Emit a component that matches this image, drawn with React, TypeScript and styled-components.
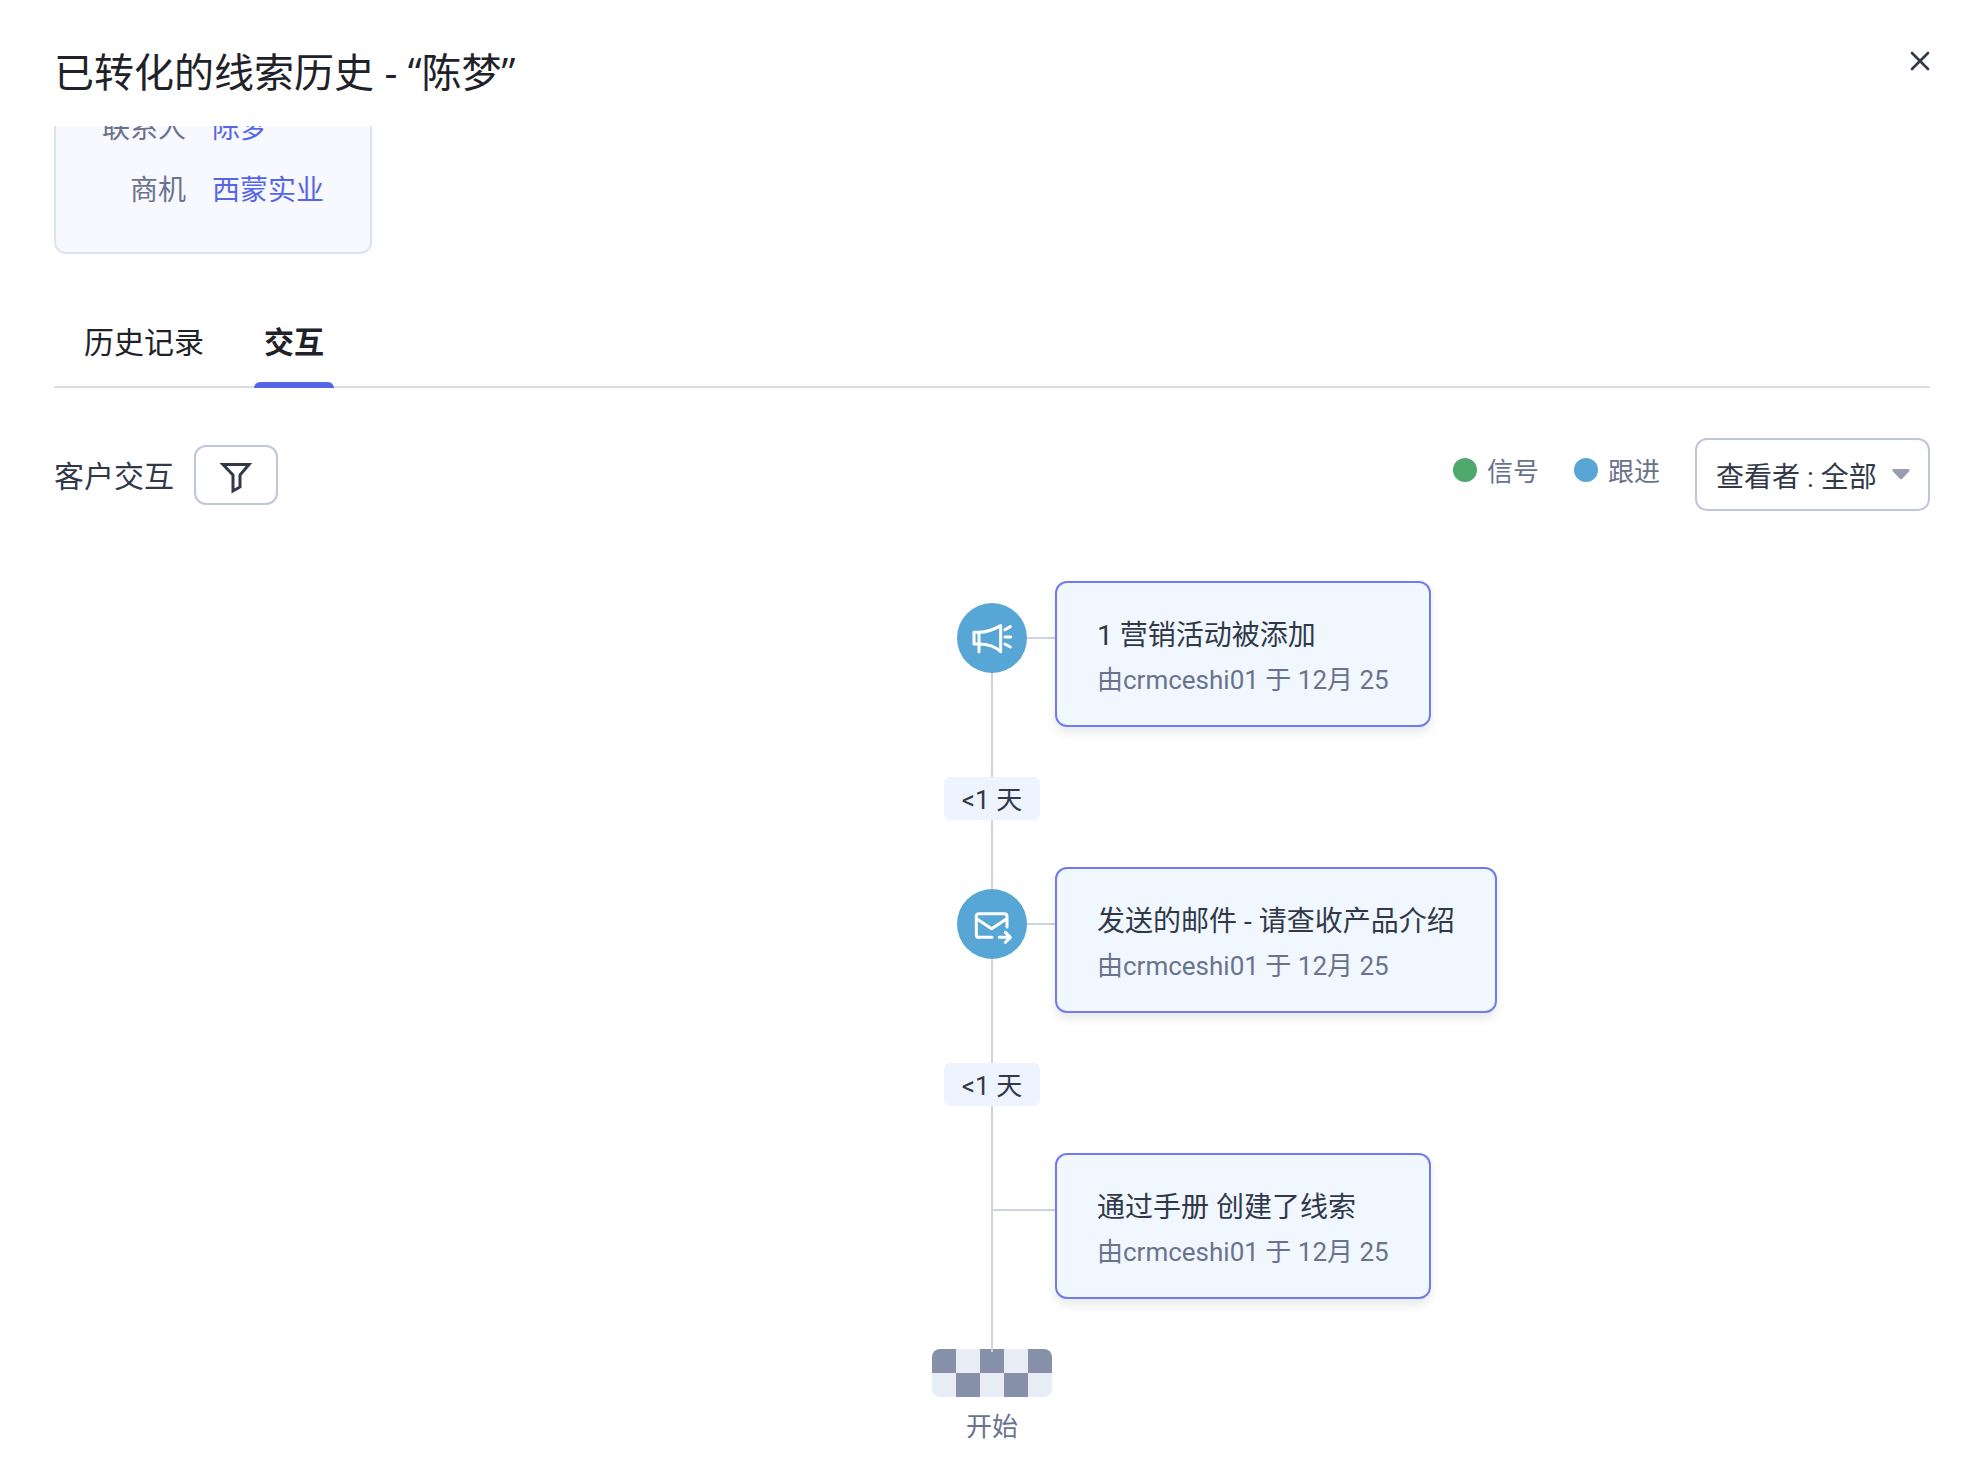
import React from "react";
import styled, { createGlobalStyle } from "styled-components";

const line = "#cfd2df";
const ink = "#313949";
const muted = "#6a738c";
const accent = "#5666e8";

const GlobalStyle = createGlobalStyle`
  *, *::before, *::after { box-sizing: border-box; }
  body { margin: 0; background: #fff; }
  body, button, select {
    font-family: Roboto, "Noto Sans CJK SC", sans-serif;
    color: ${ink};
  }
`;

const Page = styled.div`
  display: flex;
  flex-direction: column;
  padding: 0 35px 0 54px;
`;

const Header = styled.header`
  display: flex;
  justify-content: space-between;
  align-items: center;
  height: 126px;
  padding-top: 18px;
`;

const Title = styled.h1`
  margin: 0;
  font-family: "Open Sans", "Noto Sans CJK SC", sans-serif;
  font-size: 40px;
  line-height: 60px;
  font-weight: 400;
  color: #212229;
`;

const CloseButton = styled.button`
  display: flex;
  align-self: flex-start;
  margin-top: 33px;
  padding: 0;
  border: 0;
  background: none;
  cursor: pointer;
`;

const SummaryViewport = styled.section`
  display: flex;
  align-items: flex-end;
  height: 128px;
  overflow: hidden;
`;

const SummaryCard = styled.dl`
  display: grid;
  grid-template-columns: auto auto;
  gap: 20px 26px;
  margin: 0;
  padding: 40px 46px;
  border: 2px solid #dce3f0;
  border-radius: 12px;
  background: #f8f9ff;
  font-size: 28px;
  line-height: 42px;
`;

const SummaryLabel = styled.dt`
  color: ${muted};
  text-align: right;
`;

const SummaryValue = styled.dd`
  margin: 0;
`;

const SummaryLink = styled.a`
  color: ${accent};
  text-decoration: none;
`;

const Tabs = styled.div`
  display: flex;
  gap: 40px;
  margin-top: 48px;
  padding-left: 20px;
  border-bottom: 2px solid #dadaea;
`;

const Tab = styled.button<{ $active?: boolean }>`
  position: relative;
  height: 84px;
  padding: 0 10px 2px;
  border: 0;
  background: none;
  font-size: 30px;
  line-height: 44px;
  font-weight: ${(p) => (p.$active ? 700 : 400)};
  color: #212229;
  cursor: pointer;

  &::after {
    content: "";
    display: ${(p) => (p.$active ? "block" : "none")};
    position: absolute;
    left: 0;
    right: 0;
    bottom: -2px;
    height: 6px;
    border-radius: 6px 6px 0 0;
    background: ${accent};
  }
`;

const Toolbar = styled.div`
  display: flex;
  justify-content: space-between;
  align-items: center;
  margin-top: 50px;
`;

const ToolGroup = styled.div<{ $gap: number }>`
  display: flex;
  align-items: center;
  gap: ${(p) => p.$gap}px;
`;

const SectionTitle = styled.h2`
  margin: 0;
  padding-top: 4px;
  font-size: 30px;
  line-height: 44px;
  font-weight: 400;
`;

const FilterButton = styled.button`
  display: flex;
  align-items: center;
  justify-content: center;
  width: 84px;
  height: 60px;
  padding: 0;
  border: 2px solid #c1c5d9;
  border-radius: 12px;
  background: #fff;
  cursor: pointer;
`;

const LegendItem = styled.span`
  display: flex;
  align-items: center;
  gap: 10px;
  padding-bottom: 6px;
  font-size: 26px;
  line-height: 38px;
  color: ${muted};
`;

const Dot = styled.i<{ $color: string }>`
  width: 24px;
  height: 24px;
  margin-bottom: 4px;
  border-radius: 50%;
  background: ${(p) => p.$color};
`;

const SelectBox = styled.div`
  display: grid;
  align-items: center;

  > * { grid-area: 1 / 1; }
  > svg { justify-self: end; margin-right: 20px; pointer-events: none; }
`;

const ViewerSelect = styled.select`
  appearance: none;
  width: 235px;
  height: 73px;
  padding: 5px 40px 0 19px;
  border: 2px solid #c1c5d9;
  border-radius: 12px;
  background: #fff;
  font-size: 28px;
`;

const Timeline = styled.ol`
  display: flex;
  flex-direction: column;
  margin: 70px 0 0;
  padding: 0;
  list-style: none;
`;

const Event = styled.li`
  display: grid;
  grid-template-columns: 1fr 70px 1fr;
`;

const Axis = styled.div`
  grid-column: 2;
  display: flex;
  flex-direction: column;
  align-items: center;
`;

const Stem = styled.span<{ $height?: number; $hidden?: boolean }>`
  width: 2px;
  height: ${(p) => p.$height ?? 0}px;
  flex-grow: ${(p) => (p.$height ? 0 : 1)};
  background: ${(p) => (p.$hidden ? "transparent" : line)};
`;

const Badge = styled.span`
  display: flex;
  width: 70px;
  height: 70px;
  border-radius: 50%;
  background: #57a6d6;
`;

const Branch = styled.span`
  display: flex;
  align-items: center;
  align-self: flex-end;
  width: 36px;
  height: 70px;
  border-left: 2px solid ${line};
`;

const Rule = styled.span<{ $width?: number }>`
  width: ${(p) => (p.$width ? p.$width + "px" : "100%")};
  height: 2px;
  background: ${line};
`;

const CardSlot = styled.div`
  display: flex;
`;

const Connector = styled.div`
  display: flex;
  align-items: center;
  height: 114px;
`;

const Card = styled.article`
  height: 146px;
  padding: 30px 40px 0;
  border: 2px solid #707bf0;
  border-radius: 12px;
  background: #f0f7ff;
  box-shadow: 0 6px 10px rgba(40, 50, 60, 0.1);
  white-space: nowrap;
`;

const CardTitle = styled.h3`
  margin: 0;
  font-size: 28px;
  line-height: 45px;
  font-weight: 400;
`;

const CardMeta = styled.p`
  margin: 0;
  font-size: 26px;
  line-height: 45px;
  color: ${muted};
`;

const Gap = styled.li`
  display: flex;
  flex-direction: column;
  align-items: center;
  height: 140px;
`;

const Pill = styled.span`
  width: 96px;
  height: 43px;
  border-radius: 6px;
  background: #edf3ff;
  font-size: 26px;
  line-height: 46px;
  text-align: center;
`;

const Start = styled.li`
  display: flex;
  flex-direction: column;
  align-items: center;
  font-size: 26px;
  line-height: 38px;
  color: ${muted};
`;

const Flag = styled.span`
  display: flex;
  justify-content: center;
  width: 120px;
  height: 48px;
  margin-bottom: 11px;
  border-radius: 8px;
  background: repeating-conic-gradient(#e9edf6 0 25%, #8690a8 0 50%) 0 0 / 48px 48px;
`;

const MegaphoneIcon = () => (
  <svg width="70" height="70" viewBox="0 0 210 210" fill="none" stroke="#fff" strokeWidth="9" strokeLinecap="round" strokeLinejoin="round" aria-hidden="true">
    <path d="M51 88H66C90 88 112 79 131 68V146C114 130 94 123 66 123H51Z" />
    <path d="M66 88V146M144 80L160 71M144 102H161M144 123L160 132" />
  </svg>
);

const MailSentIcon = () => (
  <svg width="70" height="70" viewBox="0 0 210 210" fill="none" stroke="#fff" strokeWidth="9" strokeLinecap="round" strokeLinejoin="round" aria-hidden="true">
    <path d="M105 145H66Q58 145 58 137V82Q58 74 66 74H142Q150 74 150 82V114" />
    <path d="M60 90L104 119L148 90M127 145H158M145 130L160 145L145 160" />
  </svg>
);

interface EventData {
  title: string;
  meta: string;
  icon?: React.ReactNode;
  gap?: string;
}

const events: EventData[] = [
  { title: "1 营销活动被添加", meta: "由crmceshi01 于 12月 25", icon: <MegaphoneIcon />, gap: "<1 天" },
  { title: "发送的邮件 - 请查收产品介绍", meta: "由crmceshi01 于 12月 25", icon: <MailSentIcon />, gap: "<1 天" },
  { title: "通过手册 创建了线索", meta: "由crmceshi01 于 12月 25" },
];

export default function App() {
  return (
    <>
      <GlobalStyle />
      <Page lang="zh-CN">
        <Header>
          <Title>已转化的线索历史 - “陈梦”</Title>
          <CloseButton aria-label="关闭">
            <svg width="20" height="20" viewBox="0 0 20 20" fill="none" stroke={ink} strokeWidth="2.6" strokeLinecap="round">
              <path d="M2 2L18 18M18 2L2 18" />
            </svg>
          </CloseButton>
        </Header>
        <SummaryViewport>
          <SummaryCard>
            <SummaryLabel>联系人</SummaryLabel>
            <SummaryValue><SummaryLink href="#contact">陈梦</SummaryLink></SummaryValue>
            <SummaryLabel>商机</SummaryLabel>
            <SummaryValue><SummaryLink href="#deal">西蒙实业</SummaryLink></SummaryValue>
          </SummaryCard>
        </SummaryViewport>
        <Tabs role="tablist">
          <Tab role="tab" aria-selected={false}>历史记录</Tab>
          <Tab role="tab" aria-selected $active>交互</Tab>
        </Tabs>
        <Toolbar>
          <ToolGroup $gap={20}>
            <SectionTitle>客户交互</SectionTitle>
            <FilterButton aria-label="筛选">
              <svg width="34" height="40" viewBox="0 0 34 40" fill="none" stroke={ink} strokeWidth="3" aria-hidden="true">
                <path d="M4 9.500H30L21 20V32L14 36V20Z" />
              </svg>
            </FilterButton>
          </ToolGroup>
          <ToolGroup $gap={35}>
            <LegendItem><Dot $color="#4fa86c" />信号</LegendItem>
            <LegendItem><Dot $color="#57a6d6" />跟进</LegendItem>
            <SelectBox>
              <ViewerSelect aria-label="查看者" defaultValue="all">
                <option value="all">查看者 : 全部</option>
              </ViewerSelect>
              <svg width="18" height="11" viewBox="0 0 18 11" aria-hidden="true">
                <path d="M1.500 0H16.500Q18.500 0.500 17 2.500L10.500 9.500Q9 11 7.500 9.500L1 2.500Q-0.500 0.500 1.500 0Z" fill="#999eae" />
              </svg>
            </SelectBox>
          </ToolGroup>
        </Toolbar>
        <Timeline>
          {events.map((event, index) => (
            <React.Fragment key={event.title}>
              <Event>
                <Axis>
                  <Stem $height={22} $hidden={index === 0} />
                  {event.icon ? <Badge>{event.icon}</Badge> : <Branch><Rule /></Branch>}
                  <Stem />
                </Axis>
                <CardSlot>
                  <Connector><Rule $width={28} /></Connector>
                  <Card>
                    <CardTitle>{event.title}</CardTitle>
                    <CardMeta>{event.meta}</CardMeta>
                  </Card>
                </CardSlot>
              </Event>
              {event.gap && (
                <Gap>
                  <Stem $height={50} />
                  <Pill>{event.gap}</Pill>
                  <Stem />
                </Gap>
              )}
            </React.Fragment>
          ))}
          <Start>
            <Stem $height={50} />
            <Flag><Stem $height={3} /></Flag>
            开始
          </Start>
        </Timeline>
      </Page>
    </>
  );
}
